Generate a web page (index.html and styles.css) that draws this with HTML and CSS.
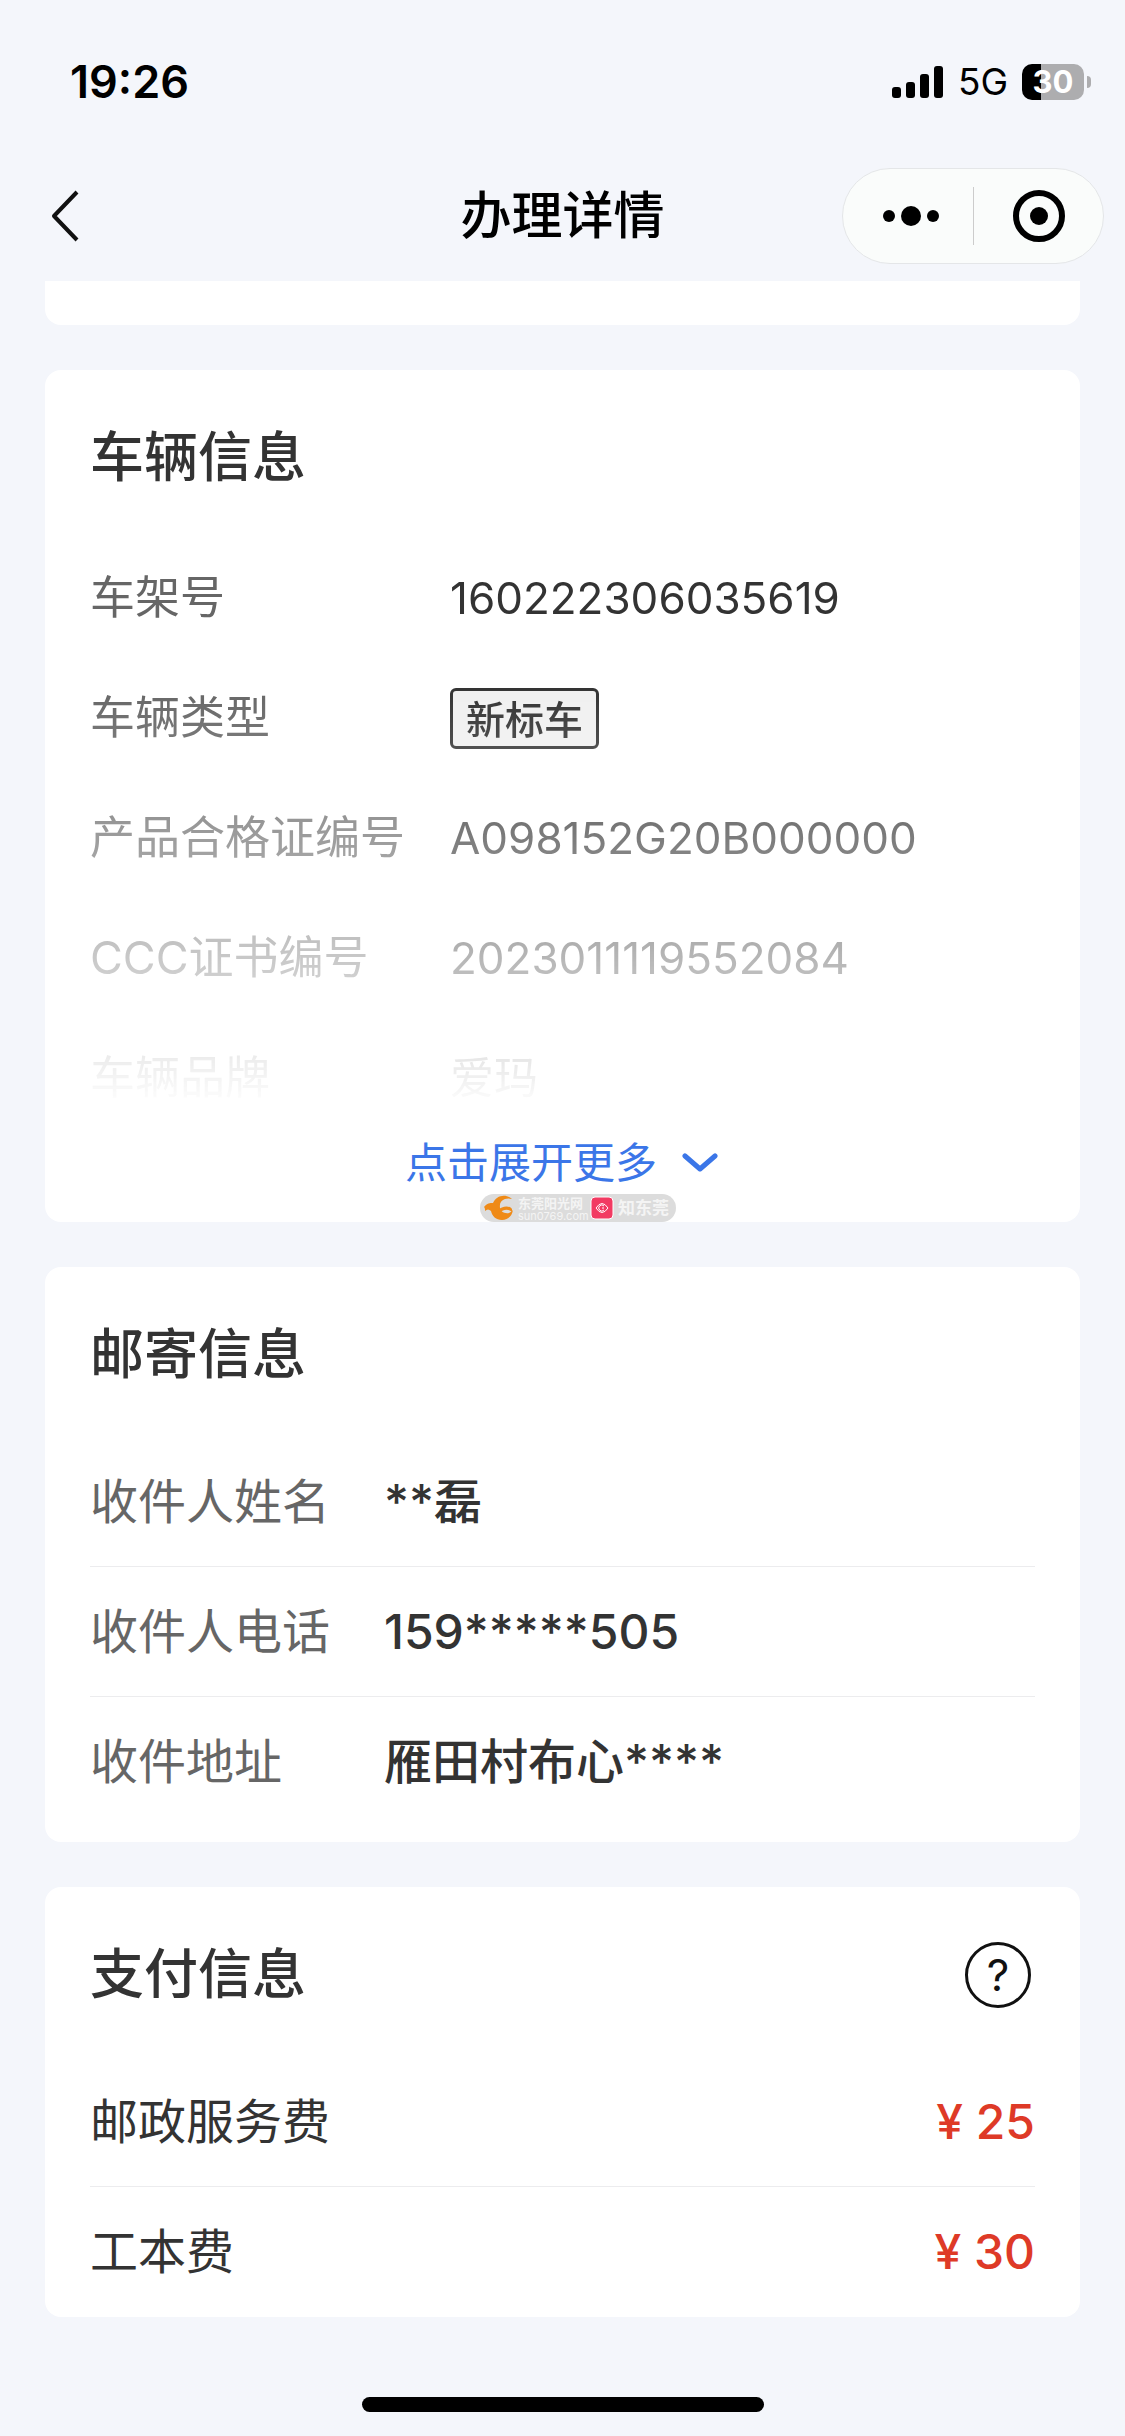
FILE: index.html
```html
<!DOCTYPE html>
<html lang="zh-CN">
<head>
    <meta charset="UTF-8">
    <meta name="viewport" content="width=device-width, initial-scale=1.0">
    <title>办理详情</title>
    <link rel="stylesheet" href="styles.css">
</head>
<body>
    <div class="status-bar">
        <span class="time">19:26</span>
        <div class="status-icons">
            <svg class="signal" width="52" height="32" viewBox="0 0 52 32">
                <rect x="0" y="21" width="9" height="11" rx="3"/>
                <rect x="14" y="16" width="9" height="16" rx="3"/>
                <rect x="28" y="8" width="9" height="24" rx="3"/>
                <rect x="42" y="0" width="9" height="32" rx="3"/>
            </svg>
            <span class="network">5G</span>
            <div class="battery">30</div>
        </div>
    </div>

    <header class="nav-bar">
        <button class="back" type="button" aria-label="返回">
            <svg width="30" height="54" viewBox="0 0 30 54" fill="none" stroke="#111" stroke-width="4">
                <path d="M27 3L4 27l23 24" stroke-linejoin="round"/>
            </svg>
        </button>
        <h1>办理详情</h1>
        <div class="capsule">
            <button class="more" type="button" aria-label="更多">
                <svg width="58" height="24" viewBox="0 0 58 24">
                    <circle cx="7" cy="12" r="6"/>
                    <circle cx="29" cy="12" r="10"/>
                    <circle cx="51" cy="12" r="6"/>
                </svg>
            </button>
            <button class="close" type="button" aria-label="关闭">
                <svg width="52" height="52" viewBox="0 0 52 52">
                    <circle cx="26" cy="26" r="23" fill="none" stroke="#000" stroke-width="6"/>
                    <circle cx="26" cy="26" r="9"/>
                </svg>
            </button>
        </div>
    </header>

    <main>
        <div class="card card-tail"></div>

        <section class="card vehicle">
            <h2>车辆信息</h2>
            <dl class="vehicle-list">
                <dt>车架号</dt>
                <dd>160222306035619</dd>
                <dt>车辆类型</dt>
                <dd><span class="tag">新标车</span></dd>
                <dt>产品合格证编号</dt>
                <dd>A098152G20B000000</dd>
                <dt>CCC证书编号</dt>
                <dd>2023011119552084</dd>
                <dt>车辆品牌</dt>
                <dd>爱玛</dd>
            </dl>
            <button class="expand" type="button">
                点击展开更多
                <svg width="38" height="22" viewBox="0 0 38 22" fill="none" stroke="#3b76e8" stroke-width="5" stroke-linecap="round" stroke-linejoin="round">
                    <path d="M3 4l15 13L33 4"/>
                </svg>
            </button>
            <div class="watermark">
                <svg width="30" height="26" viewBox="0 0 30 26">
                    <path fill="#ef8a17" d="M0 12C3 8 6 8 9 8C12 1 21-2 28 4c-7-2-12 2-12 6-1 6 4 9 9 8 2-1 3-2 4-3-1 6-5 10-11 10-6 0-10-4-11-9-2-2-4-2-6 0 0-2 0-3-1-4z"/>
                    <path fill="#ef8a17" d="M14 15c4-4 11-5 14-1v3c-3-3-9-3-12 1z"/>
                </svg>
                <span class="site"><b>东莞阳光网</b><i>sun0769.com</i></span>
                <svg width="24" height="24" viewBox="0 0 24 24" fill="none" stroke="#fff">
                    <rect x="1" y="1" width="22" height="22" rx="4" fill="#f23a62"/>
                    <path d="M6 12q6-9 12 0q-6 9-12 0z"/>
                    <path d="M14 10a3 3 0 1 0 0 4M12 12h2"/>
                </svg>
                <b class="app">知东莞</b>
            </div>
        </section>

        <section class="card">
            <h2>邮寄信息</h2>
            <dl class="rows">
                <div><dt>收件人姓名</dt><dd>**磊</dd></div>
                <div><dt>收件人电话</dt><dd>159*****505</dd></div>
                <div><dt>收件地址</dt><dd>雁田村布心****</dd></div>
            </dl>
        </section>

        <section class="card payment">
            <div class="card-head">
                <h2>支付信息</h2>
                <button class="help" type="button" aria-label="费用说明">?</button>
            </div>
            <dl class="rows fees">
                <div><dt>邮政服务费</dt><dd>¥ 25</dd></div>
                <div><dt>工本费</dt><dd>¥ 30</dd></div>
            </dl>
        </section>
    </main>

    <div class="home-indicator"></div>
</body>
</html>
```

FILE: styles.css
```css
* {
    box-sizing: border-box;
}
body {
    display: flex;
    flex-direction: column;
    min-height: 100vh;
    margin: 0;
    background-color: #f4f6fb;
    color: #333;
    font-family: Inter, "Noto Sans CJK SC", sans-serif;
    line-height: 1.2;
}
h1, h2, dl, dd {
    margin: 0;
}
button {
    padding: 0;
    border: none;
    background: none;
    color: inherit;
    font-family: inherit;
    line-height: inherit;
    cursor: pointer;
}
svg {
    display: block;
    flex-shrink: 0;
}

/* status bar */
.status-bar {
    display: flex;
    align-items: center;
    justify-content: space-between;
    height: 164px;
    padding: 0 41px 0 70px;
    color: #000;
}
.time {
    font-size: 45px;
    font-weight: 600;
}
.status-icons {
    display: flex;
    align-items: center;
    gap: 14px;
}
.network {
    font-size: 37px;
}
.battery {
    position: relative;
    width: 62px;
    height: 36px;
    border-radius: 10px;
    background: linear-gradient(to right, #000 19px, #adadaf 19px);
    color: #fff;
    font-size: 31px;
    font-weight: 700;
    line-height: 36px;
    text-align: center;
}
.battery::after {
    content: "";
    position: absolute;
    top: 12px;
    right: -7px;
    width: 4px;
    height: 12px;
    border-radius: 0 4px 4px 0;
    background-color: #adadaf;
}

/* navigation bar */
.nav-bar {
    display: grid;
    grid-template-columns: 1fr auto 1fr;
    align-items: center;
    height: 117px;
    padding: 0 21px 13px;
    color: #000;
}
.nav-bar h1 {
    font-size: 51px;
    font-weight: 500;
}
.back {
    justify-self: start;
    padding-left: 29px;
}
.capsule {
    display: flex;
    align-items: center;
    justify-self: end;
    width: 262px;
    height: 96px;
    border: 1px solid #e4e6e8;
    border-radius: 48px;
    background-color: #fafcfb;
}
.capsule button {
    display: flex;
    align-items: center;
    justify-content: center;
    width: 50%;
    height: 58px;
}
.capsule .more {
    padding-left: 6px;
}
.capsule .close {
    border-left: 1px solid #ccc;
}

/* cards */
main {
    display: flex;
    flex-direction: column;
    gap: 45px;
    padding: 0 45px;
}
.card {
    padding: 48px 45px 15px;
    border-radius: 16px;
    background-color: #fff;
}
.card-tail {
    height: 44px;
    padding: 0;
    border-radius: 0 0 16px 16px;
}
.card h2 {
    font-size: 54px;
    font-weight: 500;
    line-height: 80px;
}
.card-head {
    display: flex;
    align-items: center;
    justify-content: space-between;
    padding-right: 4px;
}

.vehicle {
    position: relative;
    padding-bottom: 34px;
}
.vehicle-list {
    display: grid;
    grid-template-columns: 360px 1fr;
    grid-auto-rows: 120px;
    align-items: center;
    margin-top: 40px;
    font-size: 45px;
    -webkit-mask-image: linear-gradient(to bottom, #000 150px, transparent 570px);
    mask-image: linear-gradient(to bottom, #000 150px, transparent 570px);
}
.vehicle-list dt {
    color: #666;
}
.vehicle-list dd {
    font-size: 44px;
}
.tag {
    display: block;
    width: fit-content;
    padding: 2px 13px 0;
    border: 3px solid #333;
    border-radius: 6px;
    background-color: #f0f0f0;
    font-size: 39px;
    font-weight: 500;
    line-height: 53px;
}
.expand {
    display: flex;
    align-items: center;
    gap: 25px;
    height: 50px;
    margin: 0 auto;
    color: #3b76e8;
    font-size: 42px;
}
.watermark {
    position: absolute;
    bottom: 0;
    left: 435px;
    display: flex;
    align-items: center;
    gap: 4px;
    width: 196px;
    height: 28px;
    padding: 0 4px;
    border-radius: 14px;
    background-color: #dcdcdc;
    color: #f4f4f4;
}
.site {
    display: flex;
    flex-direction: column;
    width: 68px;
}
.site b {
    font-size: 13px;
    line-height: 15px;
}
.site i {
    font-size: 11px;
    font-style: normal;
    line-height: 10px;
}
.app {
    font-size: 17px;
}

/* label / value rows */
.rows {
    margin-top: 42px;
    font-size: 48px;
}
.rows div {
    display: flex;
    align-items: center;
    height: 130px;
    border-bottom: 1px solid #ececee;
}
.rows div:last-child {
    border-bottom: none;
}
.rows dt {
    width: 294px;
    color: #666;
}
.rows dd {
    font-weight: 500;
}
.payment {
    padding-bottom: 0;
}
.fees div {
    justify-content: space-between;
}
.fees dt {
    width: auto;
    color: #333;
}
.fees dd {
    color: #de3a27;
}
.help {
    width: 66px;
    height: 66px;
    border: 3px solid #111;
    border-radius: 50%;
    color: #111;
    font-size: 44px;
    line-height: 60px;
}

.home-indicator {
    width: 402px;
    height: 15px;
    margin: auto auto 24px;
    border-radius: 8px;
    background-color: #000;
}
```
